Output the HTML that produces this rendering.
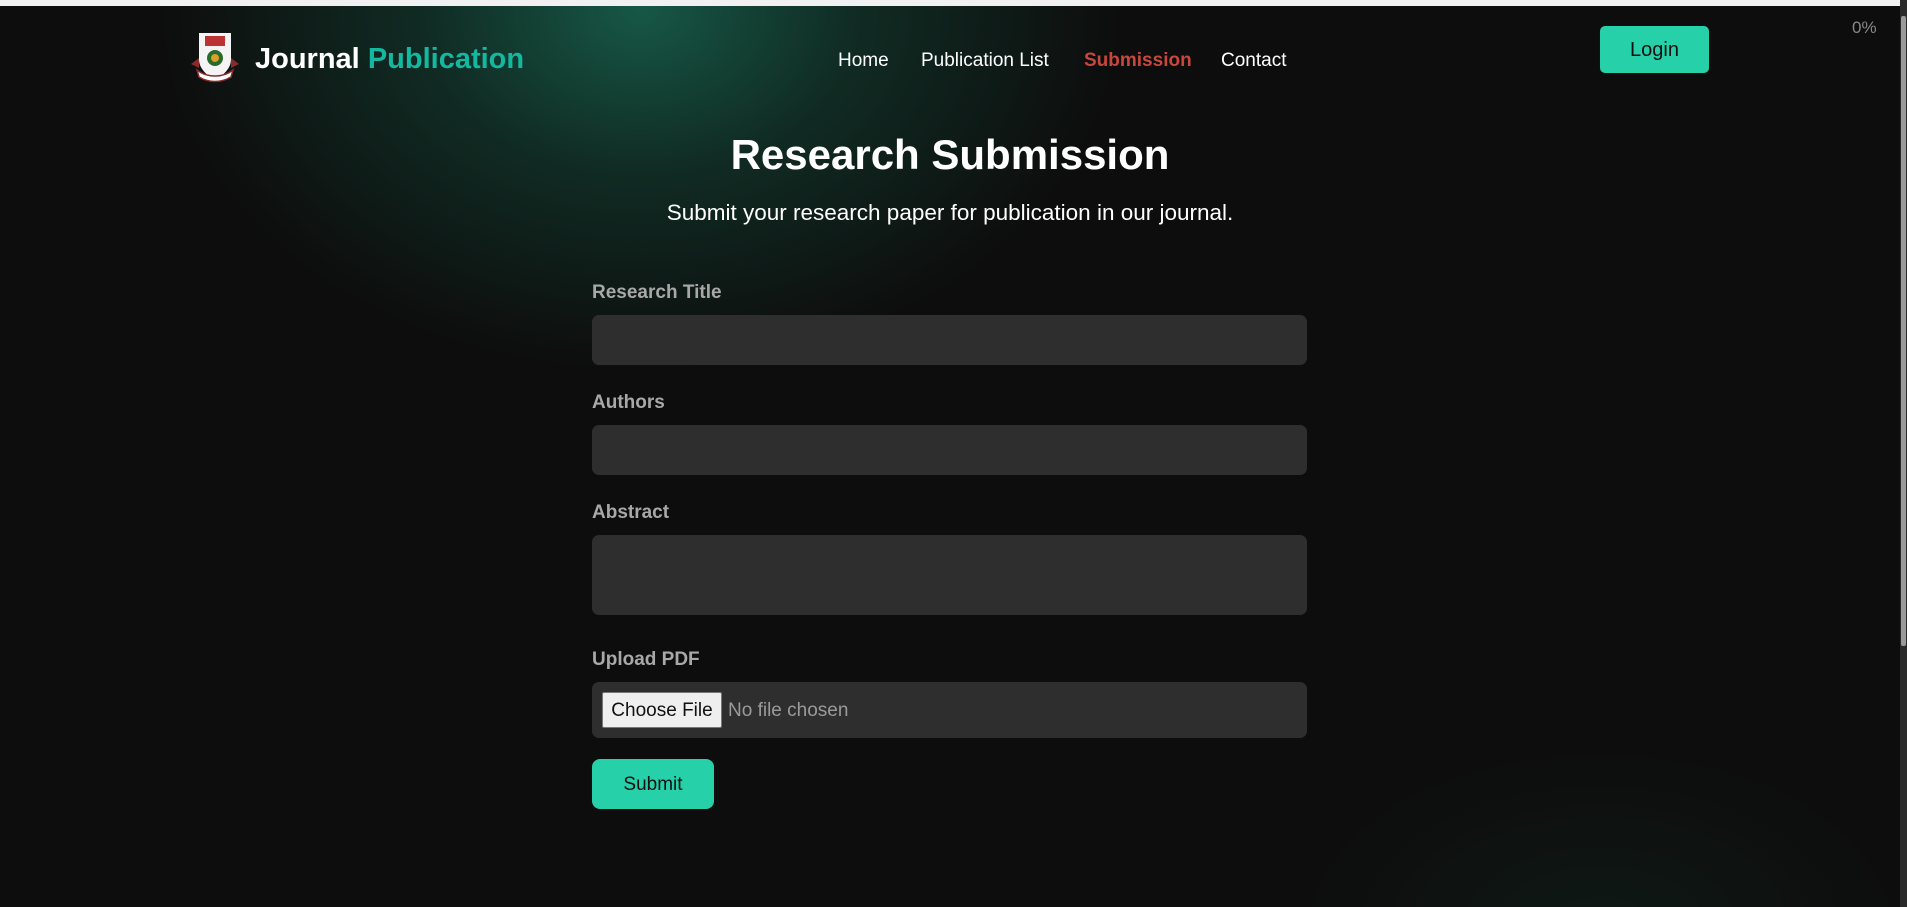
<!DOCTYPE html>
<html><head><meta charset="utf-8"><style>
*{margin:0;padding:0;box-sizing:border-box}
html,body{width:1907px;height:907px;overflow:hidden}
body{background:#0d0d0d;font-family:"Liberation Sans",sans-serif;position:relative}
.bg1{position:absolute;left:0;top:0;width:1907px;height:907px;
background:radial-gradient(ellipse 480px 360px at 640px 10px,rgba(24,100,80,0.85) 0%,rgba(20,80,62,0.45) 45%,rgba(13,13,13,0) 100%),
radial-gradient(ellipse 300px 180px at 1600px 930px,rgba(20,60,45,0.25),rgba(13,13,13,0) 100%);}
.topbar{position:absolute;left:0;top:0;width:1900px;height:6px;background:#f1f1f1}
.sb{position:absolute;left:1900px;top:0;width:7px;height:907px;background:#2b2b2b}
.sb i{position:absolute;left:1px;top:16px;width:5px;height:630px;background:#9a9a9a;border-radius:2px}
.abs{position:absolute}
.brand{left:255px;top:43px;font-size:29px;font-weight:bold;color:#fff}
.brand span{color:#14b8a0}
.nav{top:50px;font-size:19px;color:#fff}
.login{left:1600px;top:26px;width:109px;height:47px;background:#26d0a8;border-radius:5px;color:#111;font-size:20px;text-align:center;line-height:49px}
.pct{left:1852px;top:18px;color:#888;font-size:17px}
h1{position:absolute;left:0;width:1900px;text-align:center;top:131px;font-size:42px;color:#fff;font-weight:bold}
.sub{left:0;width:1900px;text-align:center;top:200px;font-size:22.5px;color:#fff}
.lbl{left:592px;font-size:19px;font-weight:bold;color:#a8a8a8}
.inp{left:592px;width:715px;background:#2e2e2e;border-radius:7px}
.cf{position:absolute;left:10px;top:10px;width:120px;height:36px;background:#efefef;border:1px solid #777;border-radius:2px;font-size:19px;color:#111;line-height:36px;text-align:center}
.nf{position:absolute;left:136px;top:18px;font-size:19px;color:#9a9a9a}
.submit{left:592px;top:759px;width:122px;height:50px;background:#26d0a8;border-radius:8px;font-size:19px;color:#111;text-align:center;line-height:52px}
</style></head><body>
<div class="bg1"></div>
<div class="topbar"></div>
<div class="sb"><i></i></div>
<svg class="abs" style="left:189px;top:32px" width="52" height="52" viewBox="0 0 52 52">
<path d="M10 1h32v26c0 10-8 16-16 22C18 43 10 37 10 27z" fill="#f4f4f4"/>
<rect x="16" y="4" width="20" height="10" fill="#b33"/>
<circle cx="26" cy="26" r="8" fill="#2a6a2a"/><circle cx="26" cy="26" r="4" fill="#d9a12a"/>
<path d="M2 32l8-6v10zM50 32l-8-6v10z" fill="#8a2a2a"/>
<path d="M8 38c10 8 26 8 36 0l-2 7c-10 6-22 6-32 0z" fill="#fff" stroke="#8a2a2a" stroke-width="1.5"/>
</svg>
<div class="abs brand">Journal <span>Publication</span></div>
<div class="abs nav" style="left:838px">Home</div>
<div class="abs nav" style="left:921px">Publication List</div>
<div class="abs nav" style="left:1084px;color:#c9463d;font-weight:bold">Submission</div>
<div class="abs nav" style="left:1221px">Contact</div>
<div class="abs login">Login</div>
<div class="abs pct">0%</div>
<h1>Research Submission</h1>
<div class="abs sub">Submit your research paper for publication in our journal.</div>
<div class="abs lbl" style="top:282px">Research Title</div>
<div class="abs inp" style="top:315px;height:50px"></div>
<div class="abs lbl" style="top:392px">Authors</div>
<div class="abs inp" style="top:425px;height:50px"></div>
<div class="abs lbl" style="top:502px">Abstract</div>
<div class="abs inp" style="top:535px;height:80px"></div>
<div class="abs lbl" style="top:649px">Upload PDF</div>
<div class="abs inp" style="top:682px;height:56px"><div class="cf">Choose File</div><div class="nf">No file chosen</div></div>
<div class="abs submit">Submit</div>
</body></html>
